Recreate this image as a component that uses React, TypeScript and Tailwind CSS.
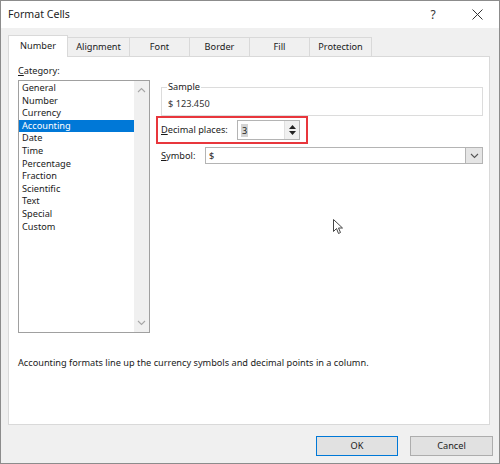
import React from "react";

const items = [
  "General",
  "Number",
  "Currency",
  "Accounting",
  "Date",
  "Time",
  "Percentage",
  "Fraction",
  "Scientific",
  "Text",
  "Special",
  "Custom",
];

const tabs: { label: string; w: string }[] = [
  { label: "Alignment", w: "w-[62px]" },
  { label: "Font", w: "w-[60px]" },
  { label: "Border", w: "w-[60px]" },
  { label: "Fill", w: "w-[60px]" },
  { label: "Protection", w: "w-[62px]" },
];

function Chevron({ up, color = "#a6a6a6" }: { up?: boolean; color?: string }) {
  return (
    <svg width="9" height="6" viewBox="0 0 9 6">
      <path
        d={up ? "M1 5 L4.5 1.5 L8 5" : "M1 1 L4.5 4.5 L8 1"}
        fill="none"
        stroke={color}
        strokeWidth="1.1"
      />
    </svg>
  );
}

export default function App() {
  return (
    <div className="relative flex h-[464px] w-[500px] flex-col border border-[#8c8c8c] bg-[#f0f0f0] font-['Noto_Sans',sans-serif] text-[#1a1a1a]">
      {/* Title bar */}
      <div className="flex h-[27px] items-center bg-white pl-[7px]">
        <span className="text-[10.6px] leading-none text-[#222]">Format Cells</span>
        <div className="ml-auto flex h-full">
          <div className="flex h-full w-[44px] items-center justify-center text-[12px] text-[#333]">?</div>
          <div className="flex h-full w-[44px] items-center justify-center">
            <svg width="11" height="11" viewBox="0 0 11 11">
              <path d="M0.5 0.5 L10.5 10.5 M10.5 0.5 L0.5 10.5" stroke="#333" strokeWidth="1" />
            </svg>
          </div>
        </div>
      </div>

      {/* Body */}
      <div className="flex flex-1 flex-col pl-[7px] pr-[6px] pt-[7px]">
        {/* Tabs */}
        <div className="flex h-[21px] items-end">
          <div className="relative z-10 -mb-px flex h-[22px] w-[60px] items-center justify-center border border-b-0 border-[#d9d9d9] bg-white pb-[1px] text-[9.2px] leading-none">
            Number
          </div>
          {tabs.map((t) => (
            <div
              key={t.label}
              className={`flex h-[19px] ${t.w} items-center justify-center border border-b-0 border-l-0 border-[#d9d9d9] bg-[#f0f0f0] text-[9.2px] leading-none`}
            >
              {t.label}
            </div>
          ))}
        </div>

        {/* Panel */}
        <div className="flex h-[369px] w-[482px] flex-col border border-[#d9d9d9] bg-white">
          <div className="flex pl-[9px] pt-[7px]">
            {/* Left column */}
            <div className="flex w-[132px] flex-col">
              <div className="h-[14px] text-[9.2px] leading-[14px]">
                <u>C</u>ategory:
              </div>
              <div className="mt-[2px] flex h-[253px] border border-[#a0a0a0]">
                <div className="flex flex-1 flex-col pt-[1px]">
                  {items.map((it) => (
                    <div
                      key={it}
                      className={`h-[12.6px] pl-[3px] text-[9.2px] leading-[12.6px] ${
                        it === "Accounting" ? "bg-[#0078d7] text-white" : ""
                      }`}
                    >
                      {it}
                    </div>
                  ))}
                </div>
                <div className="flex w-[15px] flex-col items-center justify-between bg-[#f0f0f0] py-[6px]">
                  <Chevron up />
                  <Chevron />
                </div>
              </div>
            </div>

            {/* Right column */}
            <div className="ml-[6px] flex flex-col pt-[23px]">
              <div className="relative ml-[5px] h-[29px] w-[322px] border border-[#dcdcdc] pl-[6px] pt-[9px]">
                <span className="absolute -top-[8px] left-[5px] bg-white px-[1px] text-[9.2px] leading-[14px]">
                  Sample
                </span>
                <div className="text-[9.2px] leading-[14px] text-[#333]">$ 123.450</div>
              </div>

              <div className="flex h-[28px] w-[152px] items-center border-2 border-[#e8363c] pl-[3px]">
                <div className="w-[76px] text-[9.2px] leading-none">
                  <u>D</u>ecimal places:
                </div>
                <div className="flex h-[20px] w-[63px] border border-[#b4b4b4] bg-white">
                  <div className="flex flex-1 items-center pl-[3px]">
                    <span className="bg-[#d4d4d4] px-[1px] text-[9.2px] leading-[13px]">3</span>
                  </div>
                  <div className="flex w-[15px] flex-col items-center justify-center gap-[2px] border-l border-[#e0e0e0] bg-[#f0f0f0]">
                    <svg width="7" height="4" viewBox="0 0 7 4">
                      <path d="M0 4 L3.5 0 L7 4 Z" fill="#222" />
                    </svg>
                    <svg width="7" height="4" viewBox="0 0 7 4">
                      <path d="M0 0 L3.5 4 L7 0 Z" fill="#222" />
                    </svg>
                  </div>
                </div>
              </div>

              <div className="ml-[5px] mt-[3px] flex items-center">
                <div className="w-[44px] text-[9.2px] leading-none">
                  <u>S</u>ymbol:
                </div>
                <div className="flex h-[17px] w-[278px] border border-[#b4b4b4] bg-white">
                  <div className="flex flex-1 items-center pl-[3px] text-[9.2px] leading-none">$</div>
                  <div className="flex w-[17px] items-center justify-center border-l border-[#b4b4b4] bg-[#e5e5e5]">
                    <Chevron color="#555" />
                  </div>
                </div>
              </div>
            </div>
          </div>

          <div className="mt-[23px] pl-[9px] text-[9.2px] leading-[14px]">
            Accounting formats line up the currency symbols and decimal points in a column.
          </div>
        </div>

        {/* Buttons */}
        <div className="mt-[11px] flex justify-end gap-[12px]">
          <div className="flex h-[20px] w-[82px] items-center justify-center border border-[#0078d7] bg-[#e1e1e1] text-[9.2px] leading-none">
            OK
          </div>
          <div className="flex h-[20px] w-[83px] items-center justify-center border border-[#adadad] bg-[#e1e1e1] text-[9.2px] leading-none">
            Cancel
          </div>
        </div>
      </div>

      {/* Mouse cursor */}
      <svg className="absolute left-[332px] top-[218px]" width="11" height="16" viewBox="0 0 11 16">
        <path d="M0.5 0.5 L0.5 12.5 L3.5 9.5 L5.5 14.5 L7.5 13.5 L5.5 9 L9.5 9 Z" fill="white" stroke="#444" strokeWidth="1" />
      </svg>
    </div>
  );
}
